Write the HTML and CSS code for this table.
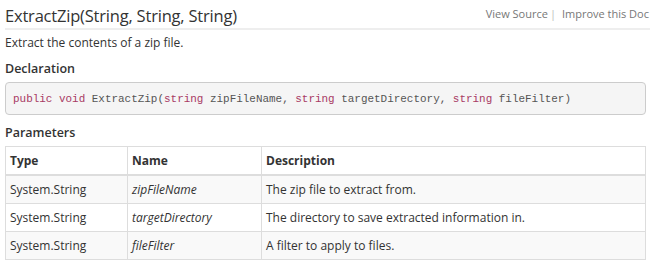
FILE: index.html
```html
<!DOCTYPE html>
<html>
<head>
<meta charset="utf-8">
<link rel="stylesheet" href="styles.css">
</head>
<body>
<div class="page">
  <div class="title-row">
    <h1 class="title">ExtractZip(String, String, String)</h1>
    <div class="links">
      <span class="link">View Source</span><span class="sep">|</span><span class="link">Improve this Doc</span>
    </div>
  </div>
  <p class="summary">Extract the contents of a zip file.</p>
  <h5 class="section">Declaration</h5>
  <pre class="code"><span class="kw">public</span> <span class="kw">void</span> ExtractZip(<span class="kw">string</span> zipFileName, <span class="kw">string</span> targetDirectory, <span class="kw">string</span> fileFilter)</pre>
  <h5 class="section params">Parameters</h5>
  <table class="tbl">
    <thead>
      <tr><th class="c1">Type</th><th class="c2">Name</th><th>Description</th></tr>
    </thead>
    <tbody>
      <tr class="odd"><td>System.String</td><td><em>zipFileName</em></td><td>The zip file to extract from.</td></tr>
      <tr><td>System.String</td><td><em>targetDirectory</em></td><td>The directory to save extracted information in.</td></tr>
      <tr class="odd"><td>System.String</td><td><em>fileFilter</em></td><td>A filter to apply to files.</td></tr>
    </tbody>
  </table>
</div>
</body>
</html>
```
FILE: styles.css
```css
html, body {
  margin: 0;
  padding: 0;
  background: #fff;
}
body {
  font-family: "Open Sans", "Noto Sans", sans-serif;
  color: #333;
  overflow: hidden;
}
.page {
  width: 641px;
  padding: 0 0 0 5px;
}
.title-row {
  display: flex;
  align-items: flex-end;
  justify-content: space-between;
  border-bottom: 2px solid #eee;
  height: 28px;
  width: 645px;
}
.title {
  margin: 0;
  font-size: 16.5px;
  font-weight: 400;
  line-height: 20px;
  padding-bottom: 2px;
  letter-spacing: -0.2px;
}
.links {
  font-size: 11px;
  color: #777;
  white-space: nowrap;
  align-self: flex-start;
  padding-top: 6px;
  margin-right: 1px;
}
.sep {
  margin: 0 6px 0 2px;
  color: #bbb;
}
.summary {
  margin: 5px 0 0;
  font-size: 12px;
  line-height: 16px;
}
.section {
  margin: 10px 0 0;
  font-size: 12.5px;
  font-weight: 600;
  line-height: 16px;
}
.params {
  margin-top: 10px;
}
.code {
  margin: 5px 0 0;
  height: 33px;
  box-sizing: border-box;
  padding: 9px 7px;
  background: #f5f5f5;
  border: 1px solid #ccc;
  border-radius: 4px;
  font-family: "Liberation Mono", "DejaVu Sans Mono", monospace;
  font-size: 10.95px;
  line-height: 14px;
  color: #555;
}
.kw {
  color: #a83a64;
}
.tbl {
  margin-top: 5px;
  width: 641px;
  border-collapse: collapse;
  border: 1px solid #ddd;
  font-size: 12px;
}
.tbl th, .tbl td {
  border: 1px solid #ddd;
  text-align: left;
  padding: 0 4px;
  height: 27px;
}
.tbl th {
  font-weight: 700;
  border-bottom: 2px solid #ddd;
  height: 27px;
}
.c1 { width: 113px; }
.c2 { width: 125px; }
.tbl tr.odd td {
  background: #f9f9f9;
}
.tbl em {
  font-style: italic;
}
```
